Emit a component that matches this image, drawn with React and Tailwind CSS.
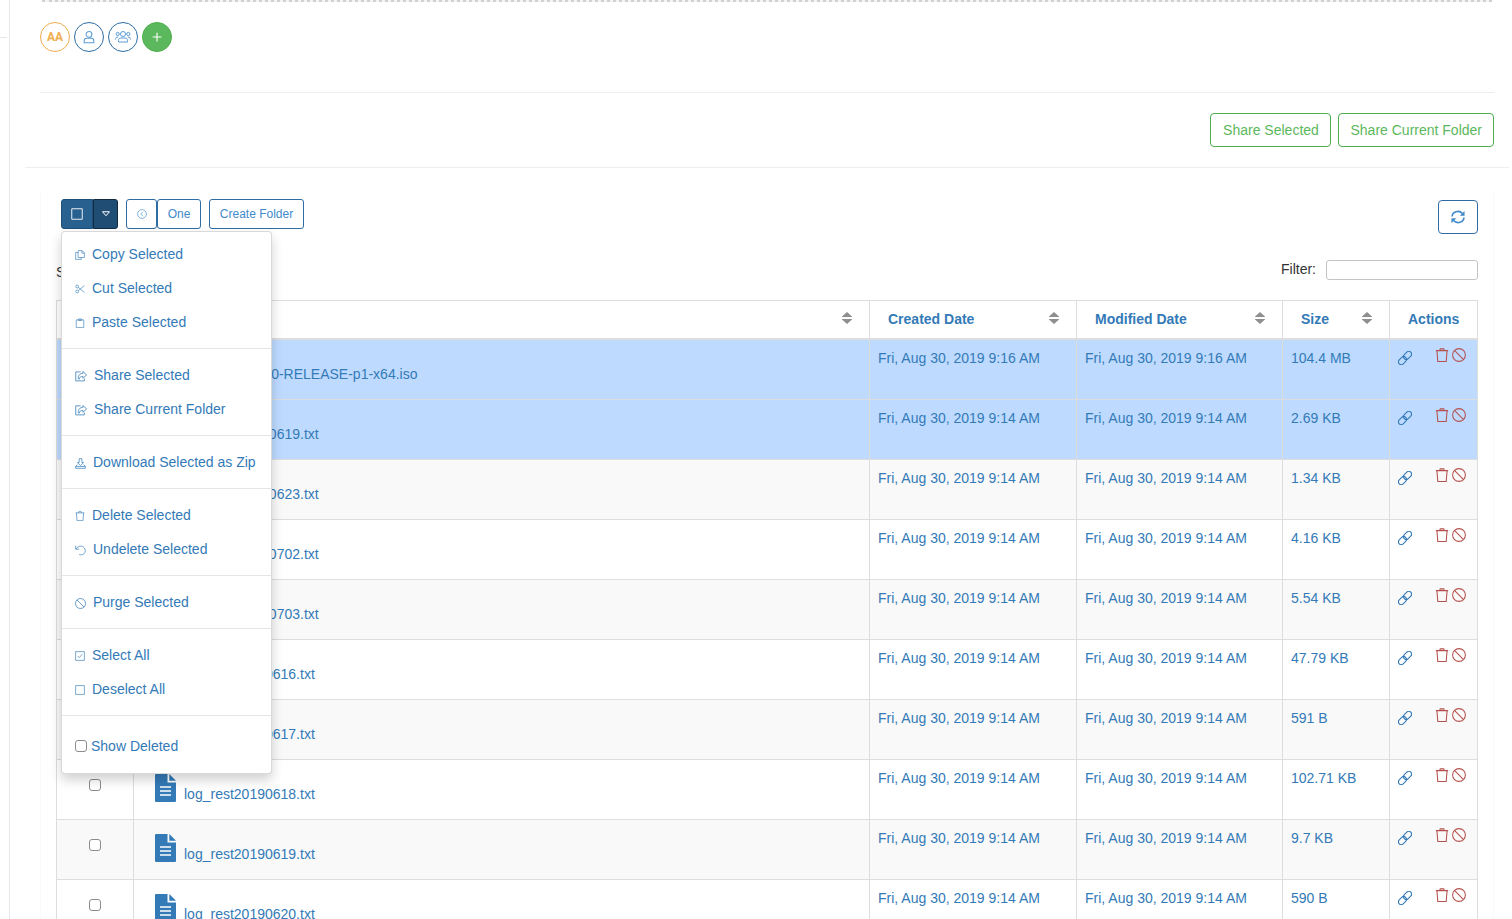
import React, { useState } from 'react';

const Icon = ({ children, className = 'w-2.5 h-2.5', box = 16, stroke = 1.2 }) => (
  <svg viewBox={`0 0 ${box} ${box}`} className={`${className} shrink-0`} fill="none" stroke="currentColor" strokeWidth={stroke} aria-hidden="true">
    {children}
  </svg>
);

const TrashIcon = (props) => (
  <Icon {...props}>
    <path d="M1 3h14M2.200 3l1 12.400h9.600l1-12.400M5.200 3l.8-2h4l.8 2" />
  </Icon>
);

const BanIcon = ({ className = 'w-[11px] h-[11px]' }) => (
  <Icon className={className}>
    <circle cx="8" cy="8" r="7.300" />
    <path d="M2.800 2.800l10.400 10.400" />
  </Icon>
);

const LinkIcon = (props) => (
  <Icon {...props}>
    <rect x="-5.200" y="-3.200" width="10.400" height="6.400" rx="3.200" transform="translate(10.900 5.100) rotate(-45)" />
    <rect x="-5.200" y="-3.200" width="10.400" height="6.400" rx="3.200" transform="translate(5.100 10.900) rotate(-45)" />
  </Icon>
);

const CopyIcon = () => (
  <Icon>
    <path d="M5 1h6.500L15 4.500V12H5zM5 4H1v11h9v-3M11 1v4h4" />
  </Icon>
);

const CutIcon = () => (
  <Icon>
    <circle cx="3.500" cy="4" r="2.300" />
    <circle cx="3.500" cy="12" r="2.300" />
    <path d="M5.400 5.400L15 13.500M5.400 10.600L15 2.500" />
  </Icon>
);

const PasteIcon = () => (
  <Icon>
    <path d="M2 3h12v12.400H2zM5.500 1.500h5v2.500h-5z" />
  </Icon>
);

const ShareIcon = () => (
  <Icon className="w-3 h-3">
    <path d="M7.500 2.500H1v12h11.500v-3" />
    <path d="M10.500 2l5 4.500-5 4.500V8.500C7.500 8.500 6 9.500 5.500 12.500 3.500 12.500 3.500 4.500 10.500 4.500z" />
  </Icon>
);

const DownloadIcon = () => (
  <Icon className="w-[11px] h-[11px]">
    <path d="M6 1h4v5.500h2.500L8 11 3.500 6.500H6zM3.500 9.500L1 12v3h14v-3l-2.500-2.500M1 12.300h14" />
  </Icon>
);

const UndoIcon = () => (
  <Icon className="w-[11px] h-[11px]">
    <path d="M1 1v5h5M1.500 5.800C4 1.500 9 .500 12.300 3c3.500 2.800 3.300 7.500.5 9.800C11 14.300 8.500 14.600 6 14" />
  </Icon>
);

const CheckedIcon = () => (
  <Icon>
    <path d="M1 1h14v14H1zM4.500 8L7 10.700 11.500 5" />
  </Icon>
);

const SquareIcon = ({ className }) => (
  <Icon className={className}>
    <path d="M1 1h14v14H1z" />
  </Icon>
);

const FileIcon = () => (
  <svg viewBox="0 0 21 28" className="w-[21px] h-7 shrink-0" aria-hidden="true">
    <path fill="#337ab7" d="M1 0H12.500v8.500H21V27a1 1 0 0 1-1 1H1a1 1 0 0 1-1-1V1a1 1 0 0 1 1-1zM14.300 0L21 6.700h-6.700z" />
    <path stroke="#fff" strokeWidth="1.400" d="M5 13h11M5 17h11M5 21h11" />
  </svg>
);

const SortIcon = () => (
  <svg viewBox="0 0 10 12" className="w-2.5 h-3 mb-0.5 shrink-0" fill="#8f8f8f" aria-hidden="true">
    <path d="M5 0l5 4.500v.5H0v-.5zM0 7h10v.500L5 12 0 7.500z" />
  </svg>
);

const menuGroups = [
  [
    { label: 'Copy Selected', icon: CopyIcon },
    { label: 'Cut Selected', icon: CutIcon },
    { label: 'Paste Selected', icon: PasteIcon },
  ],
  [
    { label: 'Share Selected', icon: ShareIcon },
    { label: 'Share Current Folder', icon: ShareIcon },
  ],
  [{ label: 'Download Selected as Zip', icon: DownloadIcon }],
  [
    { label: 'Delete Selected', icon: TrashIcon },
    { label: 'Undelete Selected', icon: UndoIcon },
  ],
  [{ label: 'Purge Selected', icon: BanIcon }],
  [
    { label: 'Select All', icon: CheckedIcon },
    { label: 'Deselect All', icon: SquareIcon },
  ],
];

const files = [
  { name: 'OpenBSD-12.0-RELEASE-p1-x64.iso', created: 'Fri, Aug 30, 2019 9:16 AM', size: '104.4 MB', selected: true },
  { name: 'log_auth20190619.txt', created: 'Fri, Aug 30, 2019 9:14 AM', size: '2.69 KB', selected: true },
  { name: 'log_auth20190623.txt', created: 'Fri, Aug 30, 2019 9:14 AM', size: '1.34 KB' },
  { name: 'log_auth20190702.txt', created: 'Fri, Aug 30, 2019 9:14 AM', size: '4.16 KB' },
  { name: 'log_auth20190703.txt', created: 'Fri, Aug 30, 2019 9:14 AM', size: '5.54 KB' },
  { name: 'log_rest20190616.txt', created: 'Fri, Aug 30, 2019 9:14 AM', size: '47.79 KB' },
  { name: 'log_rest20190617.txt', created: 'Fri, Aug 30, 2019 9:14 AM', size: '591 B' },
  { name: 'log_rest20190618.txt', created: 'Fri, Aug 30, 2019 9:14 AM', size: '102.71 KB' },
  { name: 'log_rest20190619.txt', created: 'Fri, Aug 30, 2019 9:14 AM', size: '9.7 KB' },
  { name: 'log_rest20190620.txt', created: 'Fri, Aug 30, 2019 9:14 AM', size: '590 B' },
];

const checkboxClass =
  'appearance-none block w-3 h-3 rounded-[3px] border border-[#8c8c8c] bg-white checked:bg-[#337ab7]';

const ActionsMenu = () => (
  <div className="absolute left-0 top-full mt-0.5 z-10 w-[211px] pt-[5px] pb-1.5 bg-white border border-black/15 rounded shadow-[0_6px_12px_rgba(0,0,0,0.18)]">
    {menuGroups.map((group, i) => (
      <ul key={i} className="border-b border-[#e5e5e5] pb-[9px] mb-[9px]">
        {group.map(({ label, icon: MenuIcon }) => (
          <li key={label}>
            <button type="button" className="w-full h-[34px] px-[13px] flex items-center gap-[7px] whitespace-nowrap text-[#337ab7]">
              <span className="pt-0.5 opacity-85">
                <MenuIcon />
              </span>
              {label}
            </button>
          </li>
        ))}
      </ul>
    ))}
    <label className="flex items-center gap-1 h-[42px] px-[13px] text-[#337ab7]">
      <input type="checkbox" className={checkboxClass} />
      Show Deleted
    </label>
  </div>
);

const Toolbar = ({ menuOpen, onToggle }) => (
  <div className="flex items-start justify-between pl-[5px]">
    <div className="flex gap-2 text-xs text-[#428bca]">
      <div className="relative flex h-[30px]">
        <button type="button" aria-label="Selection" className="w-8 rounded-l-[3px] border border-[#1f4f79] bg-[#286090] text-white flex items-center justify-center">
          <SquareIcon className="w-3 h-3" />
        </button>
        <button type="button" aria-label="Open menu" onClick={onToggle} className="w-[25px] rounded-r-[3px] border border-[#122b40] bg-[#204d74] text-white flex items-center justify-center">
          <Icon className="w-2 h-2">
            <path strokeWidth="2" d="M1 3.500h14l-7 8z" />
          </Icon>
        </button>
        <div className="text-sm">{menuOpen && <ActionsMenu />}</div>
      </div>
      <div className="flex h-[30px]">
        <button type="button" aria-label="Back" className="w-[31px] rounded-[3px] border border-[#2e6da4] flex items-center justify-center">
          <Icon className="w-2.5 h-2.5" stroke={1}>
            <circle cx="8" cy="8" r="7" />
            <path d="M9.500 4.500L6 8l3.500 3.500" />
          </Icon>
        </button>
        <button type="button" className="w-11 rounded-[3px] border border-[#2e6da4]">One</button>
      </div>
      <button type="button" className="h-[30px] w-[95px] rounded-[3px] border border-[#2e6da4] whitespace-nowrap">Create Folder</button>
    </div>
    <button type="button" aria-label="Refresh" className="mt-px w-10 h-[34px] rounded border border-[#2e6da4] text-[#428bca] flex items-center justify-center">
      <Icon className="w-3.5 h-3.5" stroke={1.9}>
        <path d="M1.200 7.500C1.500 2 9 -.5 13 4M14.800 8.500C14.500 14 7 16.500 3 12" />
        <path fill="currentColor" stroke="none" d="M15.500 1v5.500H10zM.5 15V9.500H6z" />
      </Icon>
    </button>
  </div>
);

const HeaderCell = ({ children, sortable = true }) => (
  <th className="border border-[#ddd] border-b-2 p-0 pb-px text-left font-bold">
    <div className="flex items-center justify-between h-9 pl-[18px] pr-[17px]">
      <span>{children}</span>
      {sortable && <SortIcon />}
    </div>
  </th>
);

const FileRow = ({ file, index }) => {
  const [checked, setChecked] = useState(Boolean(file.selected));
  const stripe = index % 2 === 0 ? 'bg-[#f9f9f9]' : 'bg-white';
  const cell = 'border border-[#ddd] px-2 py-0 align-top';

  return (
    <tr className={`h-[60px] ${checked ? 'bg-[#bedaff]' : stripe}`}>
      <td className={cell}>
        <input
          type="checkbox"
          aria-label={`Select ${file.name}`}
          checked={checked}
          onChange={(e) => setChecked(e.target.checked)}
          className={`${checkboxClass} mx-auto mt-[19px]`}
        />
      </td>
      <td className={cell}>
        <a href="#file" className="flex items-start gap-2 pl-[13px] pt-3.5">
          <FileIcon />
          <span className="pt-2.5">{file.name}</span>
        </a>
      </td>
      <td className={`${cell} pt-2 whitespace-nowrap`}>{file.created}</td>
      <td className={`${cell} pt-2 whitespace-nowrap`}>{file.created}</td>
      <td className={`${cell} pt-2 whitespace-nowrap`}>{file.size}</td>
      <td className={cell}>
        <div className="flex items-start pt-2 pr-[3px]">
          <button type="button" aria-label="Copy link" className="mt-[3px] mr-auto">
            <LinkIcon className="w-3.5 h-3.5" />
          </button>
          <button type="button" aria-label="Delete" className="mr-[3px] text-[#b5524f]">
            <TrashIcon className="w-3.5 h-3.5" />
          </button>
          <button type="button" aria-label="Purge" className="text-[#b5524f]">
            <BanIcon className="w-3.5 h-3.5" />
          </button>
        </div>
      </td>
    </tr>
  );
};

const FileTable = () => (
  <table className="mt-5 w-full table-fixed border-collapse text-[#337ab7]">
    <colgroup>
      <col className="w-[77px]" />
      <col />
      <col className="w-[207px]" />
      <col className="w-[206px]" />
      <col className="w-[107px]" />
      <col className="w-[88px]" />
    </colgroup>
    <thead>
      <tr>
        <HeaderCell sortable={false} />
        <HeaderCell>Name</HeaderCell>
        <HeaderCell>Created Date</HeaderCell>
        <HeaderCell>Modified Date</HeaderCell>
        <HeaderCell>Size</HeaderCell>
        <HeaderCell sortable={false}>Actions</HeaderCell>
      </tr>
    </thead>
    <tbody>
      {files.map((file, i) => (
        <FileRow key={i} file={file} index={i} />
      ))}
    </tbody>
  </table>
);

const ShareBadges = () => {
  const badge = 'w-[30px] h-[30px] rounded-full border flex items-center justify-center';
  return (
    <div className="flex gap-1">
      <button type="button" className={`${badge} border-[#f0ad4e] text-[#f0ad4e] font-bold text-xs font-[Roboto,sans-serif]`}>AA</button>
      <button type="button" aria-label="User" className={`${badge} border-[#2e6da4] text-[#5b9bd5]`}>
        <Icon className="w-3.5 h-3.5">
          <circle cx="8" cy="5" r="3.300" />
          <path d="M2.500 14.500v-2c0-2 1.500-3 3-3h5c1.500 0 3 1 3 3v2z" />
        </Icon>
      </button>
      <button type="button" aria-label="Group" className={`${badge} border-[#2e6da4] text-[#5b9bd5]`}>
        <Icon className="w-4 h-4" stroke={1}>
          <circle cx="8" cy="5" r="2.500" />
          <circle cx="2.700" cy="5" r="1.600" />
          <circle cx="13.300" cy="5" r="1.600" />
          <path d="M3.500 13v-1.500C3.500 9.700 4.500 9 6 9h4c1.500 0 2.500.7 2.500 2.500V13zM.5 10.500c0-1.700.7-2.500 2.700-2.500M15.500 10.500c0-1.700-.7-2.500-2.700-2.500" />
        </Icon>
      </button>
      <button type="button" aria-label="Add" className={`${badge} border-[#4cae4c] bg-[#5cb85c] text-white`}>
        <Icon className="w-2.5 h-2.5" stroke={1.8}>
          <path d="M8 1v14M1 8h14" />
        </Icon>
      </button>
    </div>
  );
};

const App = () => {
  const [menuOpen, setMenuOpen] = useState(true);
  const shareButton = 'h-[34px] min-w-[121px] px-[11px] rounded border border-[#4cae4c] text-[#5cb85c]';

  return (
    <div className="flex h-screen overflow-hidden bg-white text-sm leading-5 text-[#333] font-['Helvetica_Neue','Liberation_Sans',Arial,sans-serif]">
      <aside className="w-[10px] shrink-0 border-r border-[#e7e7eb] pr-0.5">
        <div className="h-[38px] border-b border-[#e7e7eb]" />
      </aside>

      <main className="flex-1 min-w-0 pl-[15px] pr-[3px]">
        <section className="px-[15px]">
          <div className="-mt-px mx-0.5 border-b-3 border-dotted border-[#d0d0d0] bg-[#f5f5f5]" />
          <div className="pt-5 pb-10 border-b border-[#eee]">
            <ShareBadges />
          </div>
          <div className="flex justify-end gap-[7px] py-5">
            <button type="button" className={shareButton}>Share Selected</button>
            <button type="button" className={shareButton}>Share Current Folder</button>
          </div>
        </section>

        <section className="border-t border-[#eee] pt-6 px-[15px]">
          <div className="border-x border-[#fafafa] pt-[7px] px-[15px]">
            <Toolbar menuOpen={menuOpen} onToggle={() => setMenuOpen(!menuOpen)} />
            <div className="flex justify-between mt-[26px] h-5 items-center">
              <p className="pt-1">Showing 1 to 10</p>
              <label className="flex items-start gap-2.5">
                <span className="-mt-px">Filter:</span>
                <input type="text" className="w-[152px] h-5 rounded-[3px] border border-[#c4c4c4] px-1" />
              </label>
            </div>
            <FileTable />
          </div>
        </section>
      </main>
    </div>
  );
};

export default App;
